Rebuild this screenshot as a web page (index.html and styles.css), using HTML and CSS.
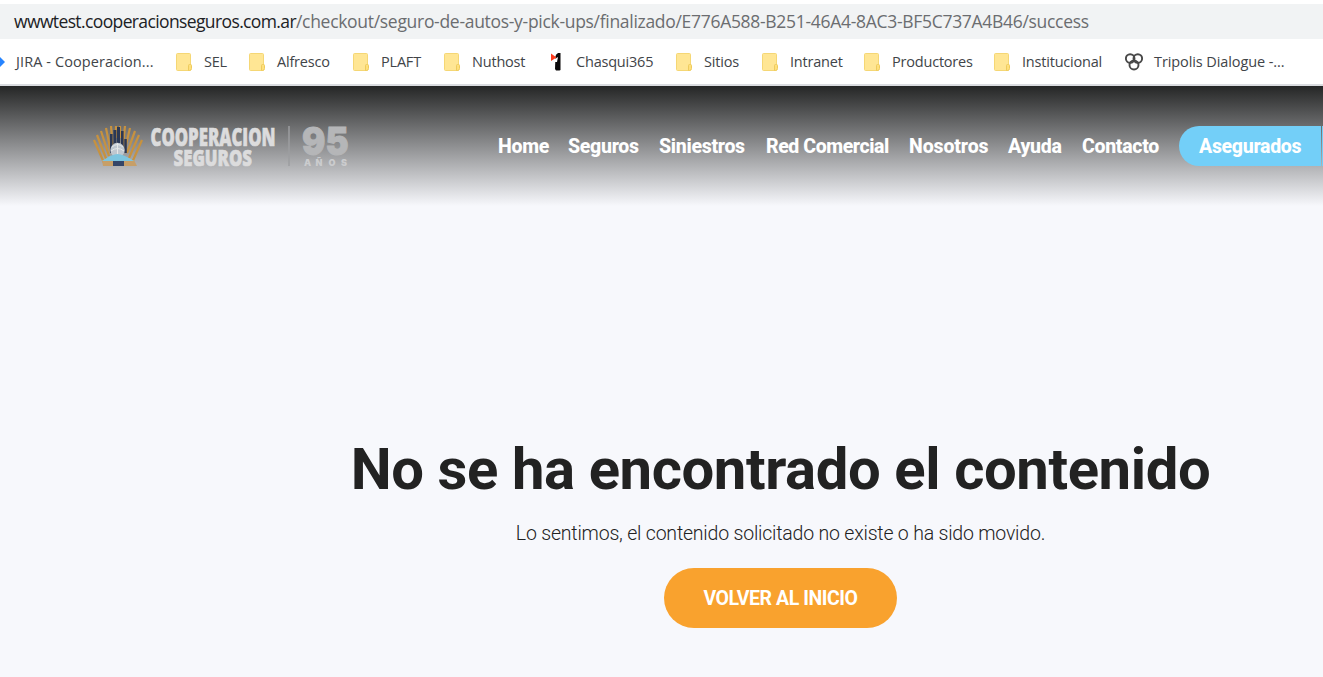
FILE: index.html
```html
<!DOCTYPE html>
<html lang="es">
<head>
<meta charset="utf-8">
<title>Cooperación Seguros</title>
<link rel="stylesheet" href="styles.css">
</head>
<body>
<svg class="defs" width="0" height="0" aria-hidden="true">
  <symbol id="folder" viewBox="0 0 16 18">
    <rect x=".5" y=".5" width="14" height="17" rx="1" fill="#ffe694" stroke="#f5d775"/>
    <path d="M12.5 17.5v-5q0-1 1-1h1q1 0 1 1v3q0 2-2 2z" fill="#ffe07c" stroke="#eecb5c"/>
  </symbol>
</svg>
<div class="address"><span class="url"><span class="host">wwwtest.cooperacionseguros.com.ar</span>/checkout/seguro-de-autos-y-pick-ups/finalizado/E776A588-B251-46A4-8AC3-BF5C737A4B46/success</span></div>
<div class="bookmarks">
  <div class="bm jira"><svg width="5" height="10"><path d="M0 0l5 5-5 5z" fill="#2684ff"/></svg><span>JIRA - Cooperacion...</span></div>
  <div class="bm sel"><svg class="folder"><use href="#folder"/></svg><span>SEL</span></div>
  <div class="bm alfresco"><svg class="folder"><use href="#folder"/></svg><span>Alfresco</span></div>
  <div class="bm plaft"><svg class="folder"><use href="#folder"/></svg><span>PLAFT</span></div>
  <div class="bm nuthost"><svg class="folder"><use href="#folder"/></svg><span>Nuthost</span></div>
  <div class="bm chasqui"><svg class="folder" viewBox="0 0 16 18"><path d="M4.500 3q1-2 2.500-3h2.500v17l-1 .5H5l-1-1.500z" fill="#0b0909"/><path d="M4 6l3-2-1 5H4z" fill="#fff"/><path d="M0 0.500l5.500 4-5.500 3.500z" fill="#ff3b1d"/></svg><span>Chasqui365</span></div>
  <div class="bm sitios"><svg class="folder"><use href="#folder"/></svg><span>Sitios</span></div>
  <div class="bm intranet"><svg class="folder"><use href="#folder"/></svg><span>Intranet</span></div>
  <div class="bm productores"><svg class="folder"><use href="#folder"/></svg><span>Productores</span></div>
  <div class="bm institucional"><svg class="folder"><use href="#folder"/></svg><span>Institucional</span></div>
  <div class="bm tripolis"><svg width="18" height="18" fill="none" stroke="#484848" stroke-width="1.9"><circle cx="5.2" cy="5.500" r="4.300"/><circle cx="12.800" cy="5.500" r="4.300"/><circle cx="9" cy="12" r="4.500"/></svg><span>Tripolis Dialogue -...</span></div>
</div>
<header class="header">
  <svg class="logo" width="258" height="44" viewBox="92 125 258 44">
    <g stroke="#c7923f" stroke-width="2.2" fill="none">
      <path d="M105 165L94 140M107 161L97 135M109 156L101 131M111 153L106 128M113 149L111 126M116 138v-12M120 138v-12M123 146L125 126M125 149L130 128M127 153L135 131M129 158L139 135M131 165L142 140"/>
    </g>
    <path d="M102 160h32l3 6h-34z" fill="#c79f68"/>
    <path d="M110 153v-19h2.600v19zM113.400 153v-23h3v23zM117 153v-26h3v26zM121 153v-22h2.600v22zM124.300 153v-14h2.500v14z" fill="#2c3854"/>
    <circle cx="117.500" cy="150" r="7.200" fill="#bfc7cf"/>
    <path d="M112 147q5.500-5 11 0M111 151q6.500-5 13 0M117.500 143v14" fill="none" stroke="#e5e7e8"/>
    <path d="M102 161q10-7 15.500-7t16.500 7z" fill="#7dc5df"/>
    <path d="M113 161h11v5h-11z" fill="#354668"/>
    <g class="brand">
      <text x="150.500" y="146" font-size="24" textLength="125" lengthAdjust="spacingAndGlyphs">COOPERACION</text>
      <text x="173.500" y="166" font-size="23.500" textLength="78.500" lengthAdjust="spacingAndGlyphs">SEGUROS</text>
    </g>
    <path d="M289 126v40" stroke="#9d9ea0" stroke-width="1.500"/>
    <g class="years">
      <text x="302" y="154.500" font-size="38.500" stroke-width="1" textLength="46.500" lengthAdjust="spacingAndGlyphs">95</text>
      <text class="anos" y="166" font-size="9" x="304 315.500 328.500 341">AÑOS</text>
    </g>
  </svg>
  <nav class="nav">
    <a class="home">Home</a><a class="seguros">Seguros</a><a class="siniestros">Siniestros</a><a class="red">Red Comercial</a><a class="nosotros">Nosotros</a><a class="ayuda">Ayuda</a><a class="contacto">Contacto</a>
    <div class="pill"><a class="asegurados">Asegurados</a><span class="toggle"></span></div>
  </nav>
</header>
<main class="main">
  <h1>No se ha encontrado el contenido</h1>
  <p>Lo sentimos, el contenido solicitado no existe o ha sido movido.</p>
  <a class="button"><span>VOLVER AL INICIO</span></a>
</main>
</body>
</html>
```
FILE: styles.css
```css
* { box-sizing: border-box; }
body { margin: 0; width: 1323px; height: 677px; overflow: hidden; background: #f7f8fc; font-family: Roboto, sans-serif; color: #222; }
.defs { display: none; }
.address { height: 39px; border-top: 4px solid #fff; background: #f1f3f4; padding-left: 14px; font: 17.500px/34px "Open Sans", sans-serif; color: #6b6d70; white-space: nowrap; }
.url { letter-spacing: -0.3px; }
.host { color: #202124; letter-spacing: -0.62px; }
.bookmarks { height: 47px; display: flex; background: #fff; border-bottom: 2px solid #dadce0; font: 14.500px/45px "Open Sans", sans-serif; color: #414448; letter-spacing: -0.2px; white-space: nowrap; }
.bm { display: flex; align-items: center; gap: 12px; flex: none; }
.folder { width: 16px; height: 18px; flex: none; }
.jira { width: 176px; gap: 11px; letter-spacing: 0.1px; }
.sel { width: 73px; }
.alfresco { width: 104px; }
.plaft { width: 91px; }
.nuthost { width: 107px; }
.chasqui { width: 125px; gap: 9px; }
.sitios { width: 86px; }
.intranet { width: 102px; }
.productores { width: 130px; }
.institucional { width: 131px; }
.tripolis { gap: 11px; letter-spacing: -0.1px; }
.header { height: 120px; display: flex; align-items: center; padding-left: 92px; background: linear-gradient(#252626, #f7f8fc); }
.logo { flex: none; margin-top: 2px; }
.brand { font-family: "Open Sans", sans-serif; font-weight: 800; fill: #dcdcdd; stroke: #dcdcdd; stroke-width: .7px; }
.years { font-family: Inter, sans-serif; font-weight: 900; fill: #b5b6b8; stroke: #b5b6b8; }
.anos { fill: #cbccce; stroke: none; }
.nav { display: flex; align-items: flex-start; gap: 20px; margin-left: 148px; flex: none; height: 40px; color: #fff; font-size: 19.500px; font-weight: 800; line-height: 42px; letter-spacing: -0.3px; white-space: nowrap; }
.home { width: 50px; }
.seguros { width: 71px; }
.siniestros { width: 87px; }
.red { width: 123px; letter-spacing: -0.42px; }
.nosotros { width: 79px; letter-spacing: -0.1px; }
.ayuda { width: 54px; }
.contacto { width: 77px; }
.pill { display: flex; gap: 1px; height: 40px; }
.asegurados { width: 142px; padding-left: 20px; border-radius: 20px 0 0 20px; background: #73cff8; }
.toggle { width: 40px; background: #73cff8; }
.main { width: 861px; margin: 233px 0 0 350px; display: flex; flex-direction: column; align-items: center; white-space: nowrap; }
h1 { margin: 0; font-size: 58px; font-weight: 700; line-height: 60px; letter-spacing: -0.4px; }
p { margin: 21px 0 0; font-size: 19.500px; font-weight: 300; line-height: 28px; letter-spacing: -0.2px; }
.button { width: 233px; height: 60px; margin-top: 20px; border-radius: 30px; background: #f9a22e; color: #fff; font-size: 19.500px; font-weight: 700; line-height: 62px; letter-spacing: -0.45px; text-align: center; }
```
